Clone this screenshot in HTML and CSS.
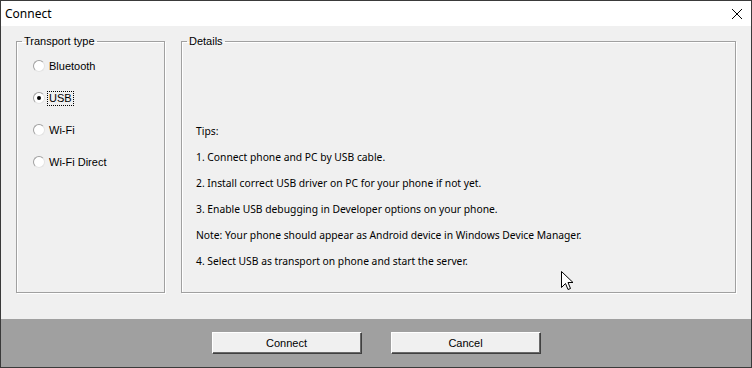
FILE: index.html
```html
<!DOCTYPE html>
<html lang="en">
<head>
    <meta charset="UTF-8">
    <title>Connect</title>
    <link rel="stylesheet" href="styles.css">
</head>
<body>
    <div class="window">
        <div class="titlebar">
            <span class="title">Connect</span>
            <svg class="close" width="12" height="12" viewBox="0 0 12 12">
                <path d="M1 1 L11 11 M11 1 L1 11" stroke="#000" stroke-width="1" fill="none"/>
            </svg>
        </div>

        <div class="client">
            <fieldset class="group transport">
                <legend>Transport type</legend>
                <div class="options">
                    <label class="option"><span class="radio"></span><span class="text">Bluetooth</span></label>
                    <label class="option"><span class="radio checked"></span><span class="text focus">USB</span></label>
                    <label class="option"><span class="radio"></span><span class="text">Wi-Fi</span></label>
                    <label class="option"><span class="radio"></span><span class="text">Wi-Fi Direct</span></label>
                </div>
            </fieldset>

            <fieldset class="group details">
                <legend>Details</legend>
                <div class="tips">
                    <p>Tips:</p>
                    <p>1. Connect phone and PC by USB cable.</p>
                    <p>2. Install correct USB driver on PC for your phone if not yet.</p>
                    <p>3. Enable USB debugging in Developer options on your phone.</p>
                    <p>Note: Your phone should appear as Android device in Windows Device Manager.</p>
                    <p>4. Select USB as transport on phone and start the server.</p>
                </div>
            </fieldset>
        </div>

        <div class="buttons">
            <button class="btn">Connect</button>
            <button class="btn">Cancel</button>
        </div>

        <!-- mouse pointer left in the capture -->
        <svg class="cursor" width="13" height="21" viewBox="0 0 13 21">
            <path d="M0.5 0.5 L0.5 16.5 L4.5 12.5 L7 18.5 L9.5 17.5 L7 11.5 L12 11.5 Z" fill="#fff" stroke="#000" stroke-width="1"/>
        </svg>
    </div>
</body>
</html>
```

FILE: styles.css
```css
body {
    margin: 0;
    font-family: "Liberation Sans", Arial, sans-serif;
    font-size: 11px;
    color: #000;
    background: #f0f0f0;
}

.window {
    position: relative;
    width: 752px;
    height: 368px;
    box-sizing: border-box;
    border: 1px solid #3a3a3a;
    display: flex;
    flex-direction: column;
}

.titlebar {
    height: 25px;
    background: #fff;
    display: flex;
    align-items: center;
    justify-content: space-between;
    padding: 0 8px 0 4px;
}

.title {
    font-family: "Noto Sans", "Liberation Sans", sans-serif;
    font-size: 12px;
}

.close {
    display: block;
}

.client {
    flex: 1;
    background: #f0f0f0;
    display: flex;
    gap: 16px;
    padding: 8px 15px 26px 15px;
}

.group {
    margin: 0;
    padding: 0;
    min-width: 0;
    border: 1px solid #a0a0a0;
    box-shadow: inset 1px 1px 0 #fff, 1px 1px 0 #fff;
}

.group legend {
    margin-left: 5px;
    padding: 0 2px;
    line-height: 14px;
    font-size: 11px;
}

.transport {
    width: 149px;
    box-sizing: border-box;
}

.details {
    flex: 1;
}

.options {
    display: flex;
    flex-direction: column;
    gap: 12px;
    padding: 8px 0 0 16px;
}

.option {
    display: flex;
    align-items: center;
    height: 20px;
}

.radio {
    position: relative;
    width: 12px;
    height: 12px;
    box-sizing: border-box;
    border-radius: 50%;
    background: #fff;
    border: 1px solid;
    border-color: #a0a0a0 #e3e3e3 #e3e3e3 #a0a0a0;
    margin-right: 2px;
}

.radio.checked::after {
    content: "";
    position: absolute;
    left: 3px;
    top: 3px;
    width: 4px;
    height: 4px;
    border-radius: 50%;
    background: #000;
}

.text {
    padding: 0 1px;
    line-height: 13px;
    border: 1px dotted transparent;
}

.text.focus {
    border-color: #000;
}

.tips {
    padding: 70px 0 0 14px;
    font-family: "Noto Sans", "Liberation Sans", sans-serif;
    font-size: 10.3px;
}

.tips p {
    margin: 0;
    line-height: 26px;
}

.buttons {
    height: 48px;
    box-sizing: border-box;
    background: #a0a0a0;
    display: flex;
    justify-content: center;
    align-items: flex-start;
    gap: 29px;
    padding-top: 13px;
}

.btn {
    width: 150px;
    height: 22px;
    padding: 0;
    background: #f0f0f0;
    font-family: "Liberation Sans", Arial, sans-serif;
    font-size: 11px;
    color: #000;
    border: 1px solid;
    border-color: #fff #404040 #404040 #fff;
    box-shadow: inset -1px -1px 0 #696969;
    cursor: pointer;
}

.cursor {
    position: absolute;
    left: 560px;
    top: 270px;
}
```
